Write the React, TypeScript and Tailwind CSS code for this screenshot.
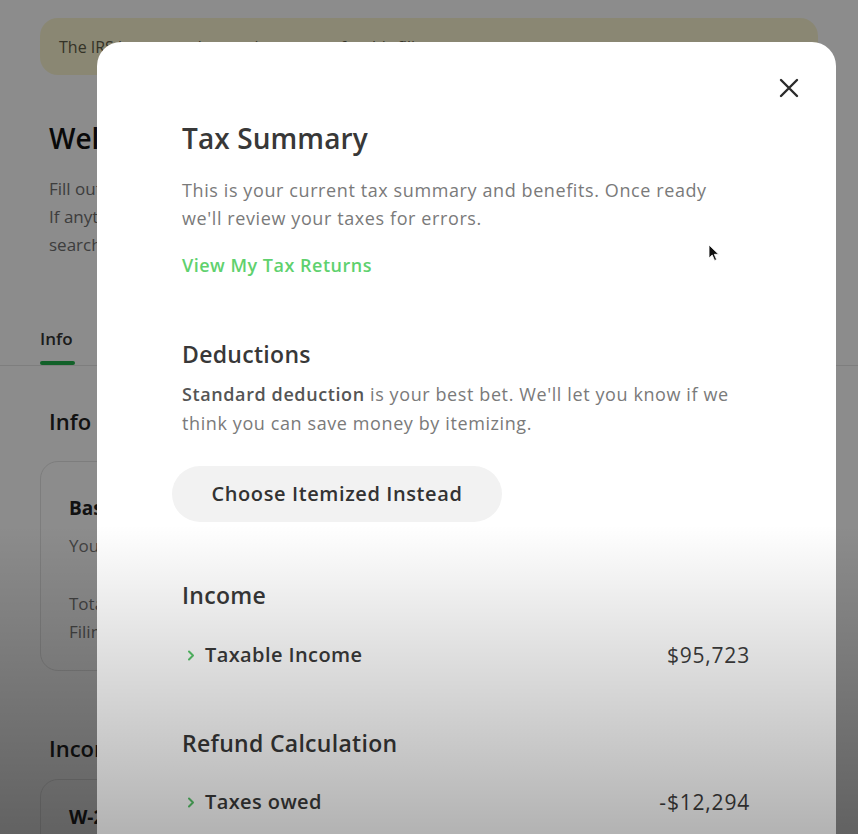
import React from 'react';

const Chevron: React.FC = () => (
  <svg width="8" height="11" viewBox="0 0 8 11" className="shrink-0">
    <polyline points="2,1.5 6,5.5 2,9.5" fill="none" stroke="#58c46a" strokeWidth="2" strokeLinecap="round" strokeLinejoin="round" />
  </svg>
);

const SummaryRow: React.FC<{ label: string; amount: string }> = ({ label, amount }) => (
  <div className="flex items-center justify-between leading-[28px]">
    <div className="flex items-center gap-[10px] pl-[5px]">
      <Chevron />
      <span className="text-[20px] tracking-[0.4px] font-semibold text-[#3a3a3a]">{label}</span>
    </div>
    <span className="text-[21px] tracking-[0.8px] text-[#3d3d3d]">{amount}</span>
  </div>
);

const BackgroundPage: React.FC = () => (
  <div className="flex flex-col">
    <div className="mx-[40px] mt-[18px] h-[57px] rounded-[18px] bg-[#fbf6d2] px-[19px] flex items-center text-[16px] text-[#5f5d48]">
      The IRS has started accepting returns for this filing season
    </div>
    <h1 className="ml-[49px] mt-[46px] text-[28px] leading-[34px] font-semibold text-[#111]">Welcome to Cash App Taxes</h1>
    <div className="ml-[49px] mt-[20px] text-[17px] leading-[28px] text-[#6f6f6f]">
      <p>Fill out your info below to get started.</p>
      <p>If anything is missing, use the search bar to find it.</p>
      <p>search for forms and topics</p>
    </div>
    <div className="mt-[68px] border-b border-[#e6e6e6] px-[40px] flex">
      <div className="flex flex-col">
        <span className="text-[17px] leading-[24px] font-semibold text-[#333]">Info</span>
        <div className="mt-[10px] h-[4px] w-[35px] rounded-full bg-[#22b14c]" />
      </div>
    </div>
    <h2 className="ml-[49px] mt-[41px] text-[22px] leading-[28px] font-semibold text-[#222]">Info</h2>
    <div className="mx-[40px] mt-[26px] h-[210px] rounded-[18px] border border-[#e4e4e4] bg-white pl-[28px] pt-[33px]">
      <div className="text-[19px] leading-[26px] font-bold text-[#222]">Basic info</div>
      <div className="mt-[12px] text-[17px] leading-[26px] text-[#777]">Your personal details</div>
      <div className="mt-[31px] text-[17px] leading-[28px] text-[#777]">Total</div>
      <div className="text-[17px] leading-[28px] text-[#777]">Filing status</div>
    </div>
    <h2 className="ml-[49px] mt-[63px] text-[22px] leading-[28px] font-semibold text-[#222]">Income</h2>
    <div className="mx-[40px] mt-[17px] h-[120px] rounded-[18px] border border-[#e4e4e4] bg-white pl-[28px] pt-[24px]">
      <div className="text-[19px] leading-[26px] font-bold text-[#222]">W-2</div>
    </div>
  </div>
);

const App: React.FC = () => {
  return (
    <div className="relative h-[834px] w-full overflow-hidden bg-white font-['Open_Sans',sans-serif]">
      <BackgroundPage />
      <div className="absolute inset-0 bg-black/45" />

      <div className="absolute left-[97px] top-[42px] right-[22px] -bottom-[40px] rounded-t-[24px] bg-white">
        <button className="absolute right-[36px] top-[35px] text-[#2a2a2a]" aria-label="Close">
          <svg width="22" height="22" viewBox="0 0 22 22">
            <path d="M3 3L19 19M19 3L3 19" stroke="currentColor" strokeWidth="2.4" strokeLinecap="round" />
          </svg>
        </button>

        <div className="flex flex-col pl-[85px] pr-[86px] pt-[79px]">
          <h2 className="text-[28px] leading-[34px] tracking-[0.1px] font-semibold text-[#383838]">Tax Summary</h2>
          <p className="mt-[21px] w-[545px] text-[18px] leading-[28px] tracking-[0.6px] text-[#7a7a7a]">
            This is your current tax summary and benefits. Once ready we'll review your taxes for errors.
          </p>
          <a className="mt-[19px] text-[18px] leading-[28px] tracking-[0.5px] font-semibold text-[#5fd16e]">View My Tax Returns</a>

          <h3 className="mt-[61px] text-[23px] leading-[28px] tracking-[0.3px] font-semibold text-[#383838]">Deductions</h3>
          <p className="mt-[12px] w-[560px] text-[18px] leading-[29px] tracking-[0.6px] text-[#7a7a7a]">
            <span className="font-semibold text-[#555]">Standard deduction</span> is your best bet. We'll let you know if we think you can save money by itemizing.
          </p>
          <div className="mt-[28px] -ml-[10px] flex">
            <button className="h-[56px] w-[330px] rounded-full bg-[#f2f2f2] text-[20px] tracking-[0.6px] font-semibold text-[#333]">
              Choose Itemized Instead
            </button>
          </div>

          <h3 className="mt-[59px] text-[23px] leading-[28px] tracking-[0.3px] font-semibold text-[#383838]">Income</h3>
          <div className="mt-[32px]">
            <SummaryRow label="Taxable Income" amount="$95,723" />
          </div>

          <h3 className="mt-[60px] text-[23px] leading-[28px] tracking-[0.3px] font-semibold text-[#383838]">Refund Calculation</h3>
          <div className="mt-[31px]">
            <SummaryRow label="Taxes owed" amount="-$12,294" />
          </div>
        </div>

        <svg className="absolute left-[611px] top-[202px]" width="12" height="18" viewBox="0 0 12 18">
          <path d="M1 1L1 14L4.2 11L6.6 16.5L8.6 15.6L6.3 10.3L10.6 10.3Z" fill="#111" stroke="#fff" strokeWidth="0.8" />
        </svg>
      </div>

      <div className="pointer-events-none absolute left-0 right-0 top-[525px] bottom-0 bg-linear-to-b from-transparent to-black/30" />
    </div>
  );
};

export default App;
